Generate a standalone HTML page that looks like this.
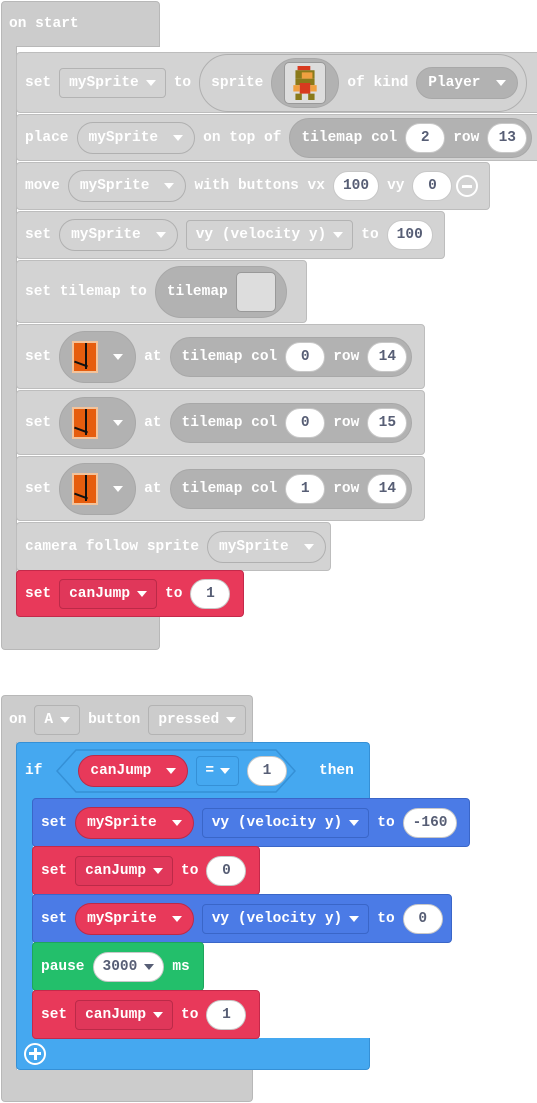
<!DOCTYPE html>
<html><head><meta charset="utf-8">
<style>
*{box-sizing:border-box;margin:0;padding:0}
body{width:537px;height:1103px;background:#fff;position:relative;overflow:hidden;font-family:"Liberation Mono",monospace;font-weight:bold;font-size:14.5px;color:#fff}
.b{position:absolute;display:flex;align-items:center;gap:8px;padding-left:8px;border:1px solid #bdbdbd;border-radius:4px;white-space:nowrap}
.g{background:#d3d3d3}
.hat{background:#cccccc;border-color:#b8b8b8}
.red{background:#e8395a;border-color:#c4294a}
.lb{background:#45a8f0;border-color:#3590d6}
.db{background:#4b7be6;border-color:#3a66c8}
.gr{background:#23bf6b;border-color:#1ea55c}
.pill{display:flex;align-items:center;gap:8px;height:32px;padding:0 11px;border-radius:16px}
.gp{border:1px solid #b0b0b0}
.gd{background:#b2b2b2;border:1px solid #a8a8a8}
.dd{display:flex;align-items:center;height:30px;padding:0 9px;border-radius:4px}
.gdd{border:1px solid #b3b3b3}
.rdd{border:1px solid #bb2a48;background:#e0375a}
.bdd{border:1px solid #3a66c8}
.lbdd{border:1px solid #3590d6}
.num{background:#fff;color:#575e75;border-radius:16px;height:30px;min-width:40px;padding:0 9px;display:flex;align-items:center;justify-content:center;border:1px solid #c8c8c8}
.rp{background:#e8395a;border:1px solid #bb2a48}
.ar{display:inline-block;width:0;height:0;border-left:5px solid transparent;border-right:5px solid transparent;border-top:6px solid #fff;margin-left:7px}
.num .ar{border-top-color:#575e75}
.tile{width:26px;height:32px;background:#e65d0e;border:2px solid #f4c39a;position:relative}
.tile:before{content:"";position:absolute;left:11px;top:0;width:2px;height:26px;background:#111}
.tile:after{content:"";position:absolute;left:0;top:20px;width:14px;height:2px;background:#111;transform:rotate(20deg)}
</style></head><body>

<div class="b hat" style="left:1px;top:1px;width:159px;height:46px;border-radius:4px 4px 0 0;padding-left:7px">on start</div>
<div class="b hat" style="left:1px;top:46px;width:16px;height:580px;border-radius:0;border-top:none;border-bottom:none"></div>
<div class="b hat" style="left:1px;top:616px;width:159px;height:34px;border-radius:0 0 4px 4px;border-top:none"></div>

<div class="b g" style="left:16px;top:52px;width:540px;height:61px">set <span class="dd gdd">mySprite<span class="ar"></span></span> to
 <span class="pill gp" style="height:58px;border-radius:29px;padding-right:8px">sprite <span class="pill gd" style="height:50px;border-radius:25px;padding:0 12px"><span style="width:42px;height:42px;background:#ddd;border:1px solid #999;border-radius:5px;display:flex;align-items:center;justify-content:center">
 <svg width="28" height="34" viewBox="0 0 13 16"><rect x="3" y="0" width="6" height="2" fill="#d83a1f"/><rect x="2" y="2" width="9" height="4" fill="#8a7a1a"/><rect x="5" y="3" width="5" height="3" fill="#f0a040"/><rect x="2" y="6" width="9" height="3" fill="#8a7a1a"/><rect x="4" y="8" width="5" height="5" fill="#d83a1f"/><rect x="1" y="9" width="3" height="3" fill="#f0a040"/><rect x="9" y="9" width="3" height="3" fill="#f0a040"/><rect x="2" y="13" width="3" height="3" fill="#8a7a1a"/><rect x="8" y="13" width="3" height="3" fill="#8a7a1a"/></svg></span></span> of kind <span class="pill gd">Player<span class="ar"></span></span></span></div>

<div class="b g" style="left:16px;top:114px;width:540px;height:47px">place <span class="pill gp">mySprite<span class="ar"></span></span> on top of <span class="pill gd" style="height:40px;border-radius:20px;padding-right:4px">tilemap col <span class="num">2</span> row <span class="num">13</span></span></div>

<div class="b g" style="left:16px;top:162px;width:474px;height:48px">move <span class="pill gp">mySprite<span class="ar"></span></span> with buttons vx <span class="num">100</span> vy <span class="num">0</span><span style="width:22px;height:22px;border:2px solid #fff;border-radius:50%;display:flex;align-items:center;justify-content:center;margin-left:-4px"><span style="width:10px;height:3px;background:#fff"></span></span></div>

<div class="b g" style="left:16px;top:211px;width:429px;height:48px">set <span class="pill gp">mySprite<span class="ar"></span></span><span class="dd gdd">vy (velocity y)<span class="ar"></span></span> to <span class="num">100</span></div>

<div class="b g" style="left:16px;top:260px;width:291px;height:63px">set tilemap to <span class="pill gd" style="height:52px;border-radius:26px;padding-right:10px">tilemap <span style="width:40px;height:40px;background:#dddddd;border:1px solid #999;border-radius:5px"></span></span></div>

<div class="b g" style="left:16px;top:324px;width:409px;height:65px">set <span class="pill gd" style="height:52px;border-radius:26px;padding:0 12px">
<span class="tile"></span><span class="ar"></span></span> at <span class="pill gd" style="height:40px;border-radius:20px;padding-right:4px">tilemap col <span class="num">0</span> row <span class="num">14</span></span></div>

<div class="b g" style="left:16px;top:390px;width:409px;height:65px">set <span class="pill gd" style="height:52px;border-radius:26px;padding:0 12px">
<span class="tile"></span><span class="ar"></span></span> at <span class="pill gd" style="height:40px;border-radius:20px;padding-right:4px">tilemap col <span class="num">0</span> row <span class="num">15</span></span></div>

<div class="b g" style="left:16px;top:456px;width:409px;height:65px">set <span class="pill gd" style="height:52px;border-radius:26px;padding:0 12px">
<span class="tile"></span><span class="ar"></span></span> at <span class="pill gd" style="height:40px;border-radius:20px;padding-right:4px">tilemap col <span class="num">1</span> row <span class="num">14</span></span></div>

<div class="b g" style="left:16px;top:522px;width:315px;height:49px">camera follow sprite <span class="pill gp">mySprite<span class="ar"></span></span></div>

<div class="b red" style="left:16px;top:570px;width:228px;height:47px">set <span class="dd rdd">canJump<span class="ar"></span></span> to <span class="num">1</span></div>

<div class="b hat" style="left:1px;top:695px;width:252px;height:48px;border-radius:4px 4px 0 0;border-bottom:none;padding-left:7px">on <span class="dd gdd">A<span class="ar"></span></span> button <span class="dd gdd">pressed<span class="ar"></span></span></div>
<div class="b hat" style="left:1px;top:742px;width:16px;height:340px;border-radius:0;border-top:none;border-bottom:none"></div>
<div class="b hat" style="left:1px;top:1070px;width:252px;height:32px;border-radius:0 0 4px 4px;border-top:none"></div>

<div class="b lb" style="left:16px;top:742px;width:354px;height:57px;border-radius:4px 4px 0 0;border-bottom:none">if
 <span style="position:relative;display:flex;align-items:center;gap:8px;height:44px;padding:0 22px 0 22px;margin-left:6px">
 <svg style="position:absolute;left:0;top:0" width="240" height="44"><polygon points="20,1 220,1 239,22 220,43 20,43 1,22" fill="#45a8f0" stroke="#3590d6" stroke-width="1.5"/></svg>
 <span class="pill rp" style="position:relative">canJump<span class="ar"></span></span><span class="dd lbdd" style="padding:0 8px;position:relative">=<span class="ar" style="margin-left:6px"></span></span><span class="num" style="position:relative">1</span></span><span style="margin-left:2px">then</span></div>
<div style="position:absolute;left:16px;top:798px;width:17px;height:242px;background:#45a8f0;border-left:1px solid #3590d6"></div>
<div class="b lb" style="left:16px;top:1038px;width:354px;height:32px;border-radius:0 0 4px 4px;border-top:none"><span style="width:22px;height:22px;border:2px solid #fff;border-radius:50%;display:flex;align-items:center;justify-content:center;position:relative;margin-left:-1px"><span style="width:12px;height:3px;background:#fff;position:absolute"></span><span style="width:3px;height:12px;background:#fff;position:absolute"></span></span></div>

<div class="b db" style="left:32px;top:798px;width:438px;height:49px">set <span class="pill rp">mySprite<span class="ar"></span></span><span class="dd bdd">vy (velocity y)<span class="ar"></span></span> to <span class="num">-160</span></div>
<div class="b red" style="left:32px;top:846px;width:228px;height:49px">set <span class="dd rdd">canJump<span class="ar"></span></span> to <span class="num">0</span></div>
<div class="b db" style="left:32px;top:894px;width:420px;height:49px">set <span class="pill rp">mySprite<span class="ar"></span></span><span class="dd bdd">vy (velocity y)<span class="ar"></span></span> to <span class="num">0</span></div>
<div class="b gr" style="left:32px;top:942px;width:172px;height:49px">pause <span class="num" style="border-radius:16px">3000<span class="ar"></span></span> ms</div>
<div class="b red" style="left:32px;top:990px;width:228px;height:49px">set <span class="dd rdd">canJump<span class="ar"></span></span> to <span class="num">1</span></div>

</body></html>
